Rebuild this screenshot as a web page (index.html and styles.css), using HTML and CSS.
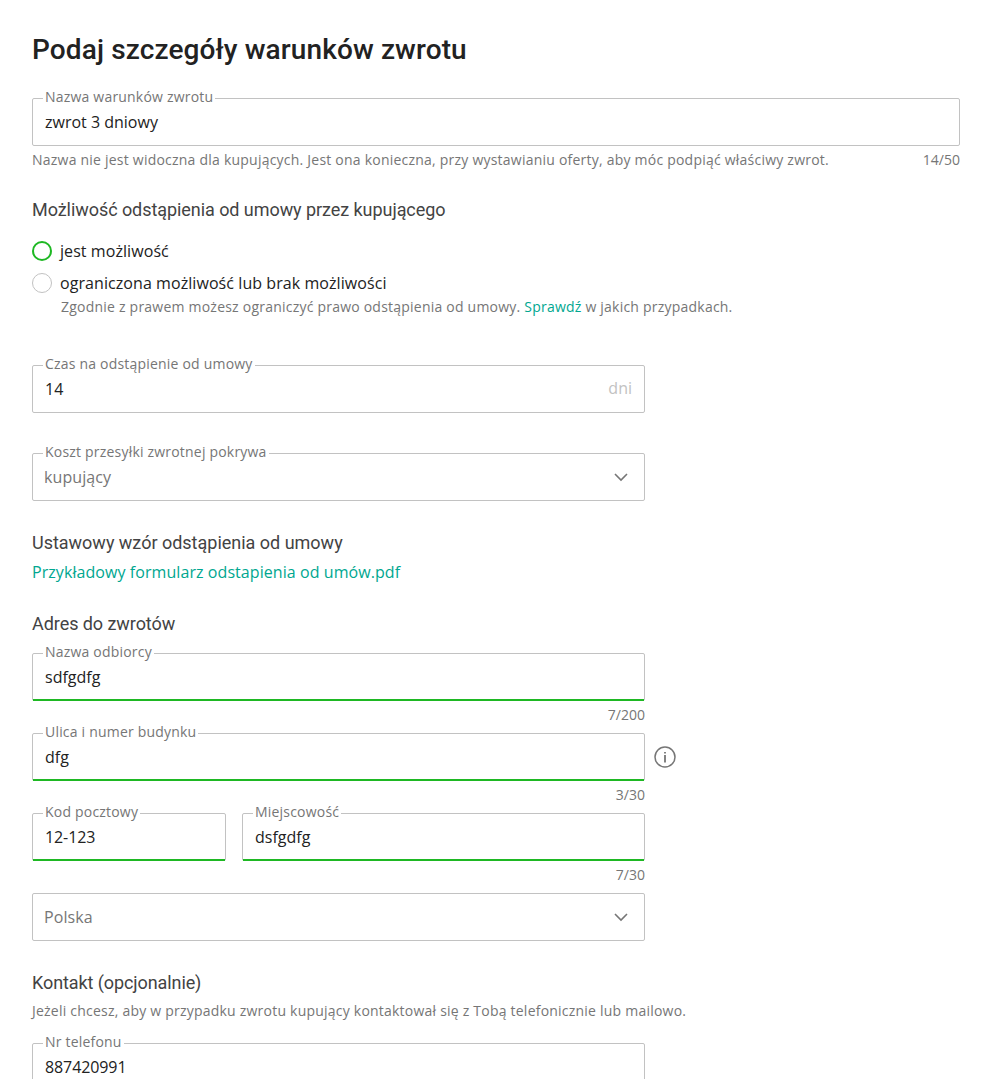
FILE: index.html
```html
<!DOCTYPE html>
<html lang="pl">
<head>
<meta charset="utf-8">
<title>Warunki zwrotu</title>
<link rel="stylesheet" href="styles.css">
</head>
<body>
<main class="page">
  <h1 class="title">Podaj szczegóły warunków zwrotu</h1>
  <div class="field"><span class="label">Nazwa warunków zwrotu</span><span class="value">zwrot 3 dniowy</span></div>
  <div class="helper"><span class="helper-text">Nazwa nie jest widoczna dla kupujących. Jest ona konieczna, przy wystawianiu oferty, aby móc podpiąć właściwy zwrot.</span><span>14/50</span></div>

  <h2 class="heading heading-options">Możliwość odstąpienia od umowy przez kupującego</h2>
  <div class="option"><span class="radio radio-on"></span>jest możliwość</div>
  <div class="option"><span class="radio"></span>ograniczona możliwość lub brak możliwości</div>
  <p class="note note-option">Zgodnie z prawem możesz ograniczyć prawo odstąpienia od umowy. <a class="link">Sprawdź</a> w jakich przypadkach.</p>

  <div class="column">
    <div class="field field-time"><span class="label">Czas na odstąpienie od umowy</span><span class="value">14</span><span class="unit">dni</span></div>
    <div class="field field-cost"><span class="label">Koszt przesyłki zwrotnej pokrywa</span><span class="value value-select">kupujący</span><svg class="chevron" viewBox="0 0 16 16"><path d="M2 5l6 6 6-6"/></svg></div>
  </div>

  <h2 class="heading heading-form">Ustawowy wzór odstąpienia od umowy</h2>
  <p class="download"><a class="link">Przykładowy formularz odstapienia od umów.pdf</a></p>

  <h2 class="heading heading-address">Adres do zwrotów</h2>
  <div class="column">
    <div class="field valid"><span class="label">Nazwa odbiorcy</span><span class="value">sdfgdfg</span></div>
    <div class="counter">7/200</div>
    <div class="street">
      <div class="field valid"><span class="label">Ulica i numer budynku</span><span class="value">dfg</span></div>
      <svg class="info" viewBox="0 0 24 24"><circle cx="12" cy="12" r="10"/><path class="info-mark" d="M12 10v7.4M12 7v1.6"/></svg>
    </div>
    <div class="counter">3/30</div>
    <div class="city-row">
      <div class="field valid"><span class="label">Kod pocztowy</span><span class="value value-number">12-123</span></div>
      <div class="field valid"><span class="label">Miejscowość</span><span class="value">dsfgdfg</span></div>
    </div>
    <div class="counter">7/30</div>
    <div class="field"><span class="value value-select">Polska</span><svg class="chevron" viewBox="0 0 16 16"><path d="M2 5l6 6 6-6"/></svg></div>
  </div>

  <h2 class="heading heading-contact">Kontakt (opcjonalnie)</h2>
  <p class="note note-contact">Jeżeli chcesz, aby w przypadku zwrotu kupujący kontaktował się z Tobą telefonicznie lub mailowo.</p>
  <div class="column">
    <div class="field"><span class="label">Nr telefonu</span><span class="value value-number">887420991</span></div>
  </div>
</main>
</body>
</html>
```
FILE: styles.css
```css
* { box-sizing: border-box; }
body { margin: 0; background: #fff; color: #222; font: 16px/24px "Open Sans", sans-serif; }
.page { height: 1079px; overflow: hidden; padding: 33px 32px 0; }
.title { margin: 0 0 31px; font: 500 28px/34px Roboto, sans-serif; letter-spacing: .12px; color: #222; }
.heading { margin: 0; font: 400 18px/24px Roboto, sans-serif; letter-spacing: -.06px; color: #434343; }
.field { position: relative; display: flex; align-items: center; justify-content: space-between; height: 48px; padding: 0 12px; border: 1px solid #c2c2c2; border-radius: 2px; }
.label { position: absolute; top: -11px; left: 10px; padding: 0 2px; background: #fff; color: #767676; font-size: 14px; line-height: 18px; letter-spacing: .2px; white-space: nowrap; }
.valid::after { content: ""; position: absolute; right: 0; bottom: -1px; left: 0; height: 2px; background: #1eb823; }
.value-select { margin-left: -1px; color: #767676; letter-spacing: .08px; }
.value-number { letter-spacing: -.1px; }
.unit { margin-bottom: 2px; color: #c2c2c2; }
.chevron { width: 16px; height: 16px; margin-right: 3px; fill: none; stroke: #767676; stroke-width: 1.6; }
.helper { display: flex; justify-content: space-between; margin-top: 4px; color: #767676; font-size: 14px; line-height: 20px; }
.helper-text { letter-spacing: .224px; }
.heading-options { margin: 28px 0 17px; }
.option { display: flex; align-items: center; gap: 8px; height: 24px; margin-bottom: 8px; letter-spacing: .07px; }
.radio { width: 20px; height: 20px; border: 1px solid #c2c2c2; border-radius: 50%; }
.radio-on { border: 2px solid #1eb823; }
.note { margin: 0; color: #767676; font-size: 14px; line-height: 20px; letter-spacing: .22px; }
.note-option { margin: -6px 0 0 29px; }
.link { color: #00a790; }
.column { width: 613px; }
.field-time { margin-top: 48px; }
.field-cost { margin-top: 40px; }
.heading-form { margin-top: 30px; letter-spacing: -.01px; }
.download { margin: 5px 0 0; letter-spacing: .07px; }
.heading-address { margin: 28px 0 17px; }
.counter { height: 32px; padding-top: 4px; color: #767676; font-size: 14px; line-height: 20px; text-align: right; }
.street { display: flex; align-items: center; gap: 8px; width: 645px; }
.street .field { width: 613px; }
.info { width: 24px; height: 24px; fill: none; stroke: #767676; stroke-width: 1.5; }
.info-mark { stroke-width: 1.8; }
.city-row { display: grid; grid-template-columns: 194px 403px; gap: 16px; }
.heading-contact { margin: 30px 0 6px; letter-spacing: -.09px; }
.note-contact { margin-bottom: 22px; }
```
